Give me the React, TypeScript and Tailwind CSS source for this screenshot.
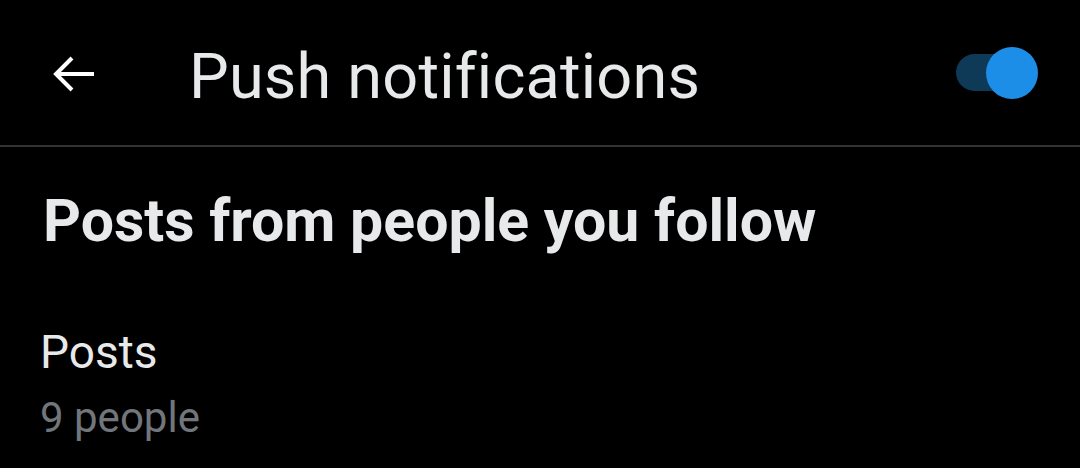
import React from "react";

// ── Header ─────────────────────────────────────────────────────────────────────
function Header() {
  return (
    <div className="flex items-center h-[147px] border-b-2 border-[#2f3336] pl-[52px] pr-[42px]">
      <svg width="44" height="36" viewBox="0 0 44 36" fill="none" className="shrink-0 mt-[2px]">
        <path d="M42 18H4M20 2L4 18l16 16" stroke="#ffffff" strokeWidth="4" strokeLinecap="butt" />
      </svg>
      <div className="ml-[93px] mt-[8px] text-[63px] leading-none text-[#e7e9ea] tracking-[0.2px]">Push notifications</div>
      <div className="ml-auto relative w-[82px] h-[52px] flex items-center">
        <div className="w-[60px] h-[37px] rounded-full bg-[#0e3a57]" />
        <div className="absolute right-0 top-0 w-[52px] h-[52px] rounded-full bg-[#1d8ee8]" />
      </div>
    </div>
  );
}

export default function App() {
  return (
    <div className="w-[1080px] h-[468px] bg-black overflow-hidden" style={{ fontFamily: "Roboto, 'Liberation Sans', sans-serif" }}>
      <Header />
      <div className="pl-[43px] pt-[44px]">
        <div className="text-[59px] leading-none font-bold text-[#e7e9ea]">Posts from people you follow</div>
      </div>
      <div className="pl-[40px] pt-[79px]">
        <div className="text-[46px] leading-none text-[#e7e9ea]">Posts</div>
        <div className="mt-[22px] text-[42px] leading-none text-[#71767b]">9 people</div>
      </div>
    </div>
  );
}
